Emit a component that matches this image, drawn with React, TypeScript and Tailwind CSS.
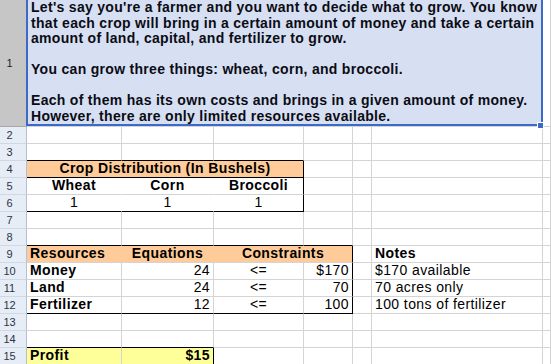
import type { ReactNode } from 'react';

type Align = 'left' | 'center' | 'right';
type Edge = 'grid' | 'black' | 'none';

const alignClass: Record<Align, string> = {
  left: 'justify-start',
  center: 'justify-center',
  right: 'justify-end',
};

const bottomClass: Record<Edge, string> = {
  grid: 'border-b-[#d4d4d4]',
  black: 'border-b-black',
  none: 'border-b-transparent',
};

const rightClass: Record<Edge, string> = {
  grid: 'border-r-[#d4d4d4]',
  black: 'border-r-black',
  none: 'border-r-transparent',
};

function Cell({
  children,
  span = '',
  align = 'left',
  bold = false,
  fill = '',
  bottom = 'grid',
  right = 'grid',
}: {
  children?: ReactNode;
  span?: string;
  align?: Align;
  bold?: boolean;
  fill?: string;
  bottom?: Edge;
  right?: Edge;
}) {
  return (
    <div
      className={[
        'flex items-end overflow-hidden whitespace-nowrap border-r border-b px-[3px] pb-px leading-[15px]',
        alignClass[align],
        bottomClass[bottom],
        rightClass[right],
        bold ? 'font-bold' : '',
        fill,
        span,
      ].join(' ')}
    >
      {children}
    </div>
  );
}

function RowHead({ n, active = false }: { n: number; active?: boolean }) {
  return (
    <div
      className={[
        'flex items-center justify-center border-r border-b pr-[7px] text-[11px] leading-[13px] tracking-normal',
        active
          ? 'bg-[#c6c6c6] border-r-[#a9a9a9] border-b-[#a9a9a9] text-[#222]'
          : 'bg-[#e6edf7] border-r-[#b3c0d2] border-b-[#cfd8e5] text-[#2e3440]',
      ].join(' ')}
    >
      {n}
    </div>
  );
}

function Blank({ count, bottom = 'grid' }: { count: number; bottom?: Edge }) {
  return (
    <>
      {Array.from({ length: count }, (_, i) => (
        <Cell key={i} bottom={bottom} />
      ))}
    </>
  );
}

const intro = [
  "Let's say you're a farmer and you want to decide what to grow. You know",
  'that each crop will bring in a certain amount of money and take a certain',
  'amount of land, capital, and fertilizer to grow.',
  '',
  'You can grow three things: wheat, corn, and broccoli.',
  '',
  'Each of them has its own costs and brings in a given amount of money.',
  'However, there are only limited resources available.',
];

const resources = [
  { name: 'Money', used: 24, limit: '$170', note: '$170 available' },
  { name: 'Land', used: 24, limit: '70', note: '70 acres only' },
  { name: 'Fertilizer', used: 12, limit: '100', note: '100 tons of fertilizer' },
];

export default function App() {
  return (
    <div className="h-[364px] w-[551px] overflow-hidden bg-white font-['Liberation_Sans',Arial,sans-serif] text-[14px] tracking-[0.4px] text-black">
      <div className="grid grid-cols-[27px_95px_92px_90px_49px_19px_171px_1fr] grid-rows-[127px_repeat(14,17px)]">
        {/* row 1: merged intro cell, selected */}
        <RowHead n={1} active />
        <div className="relative col-span-6 flex items-end border-r border-b border-r-[#d4d4d4] border-b-[#d4d4d4] bg-[#d7e0f3] pb-[2px] pl-[4px]">
          <div className="font-bold leading-[15.5px] tracking-[0.3px] text-[#0c0c14]">
            {intro.map((line, i) => (
              <div key={i} className="h-[15.5px] whitespace-nowrap">
                {line}
              </div>
            ))}
          </div>
          <div className="pointer-events-none absolute -top-[2px] -left-px -right-px bottom-0 border-2 border-[#3c6bc7]" />
          <div className="absolute -right-[2px] -bottom-[3px] z-10 h-[7px] w-[7px] border border-white bg-[#3c6bc7]" />
        </div>
        <Cell />

        {/* row 2 */}
        <RowHead n={2} />
        <Blank count={7} />

        {/* row 3 */}
        <RowHead n={3} />
        <Blank count={3} bottom="black" />
        <Blank count={4} />

        {/* row 4 */}
        <RowHead n={4} />
        <Cell span="col-span-3" align="center" bold fill="bg-[#ffcc99]" bottom="black" right="black">
          Crop Distribution (In Bushels)
        </Cell>
        <Blank count={4} />

        {/* row 5 */}
        <RowHead n={5} />
        <Cell align="center" bold right="none">Wheat</Cell>
        <Cell align="center" bold right="none">Corn</Cell>
        <Cell align="center" bold right="black">Broccoli</Cell>
        <Blank count={4} />

        {/* row 6 */}
        <RowHead n={6} />
        <Cell align="center" bottom="black" right="none">1</Cell>
        <Cell align="center" bottom="black" right="none">1</Cell>
        <Cell align="center" bottom="black" right="black">1</Cell>
        <Blank count={4} />

        {/* row 7 */}
        <RowHead n={7} />
        <Blank count={7} />

        {/* row 8 */}
        <RowHead n={8} />
        <Blank count={4} bottom="black" />
        <Blank count={3} />

        {/* row 9 */}
        <RowHead n={9} />
        <Cell bold fill="bg-[#ffcc99]" right="none">Resources</Cell>
        <Cell align="center" bold fill="bg-[#ffcc99]" right="none">Equations</Cell>
        <Cell span="col-span-2" align="center" bold fill="bg-[#ffcc99]" right="black">
          Constraints
        </Cell>
        <Cell />
        <Cell bold>Notes</Cell>
        <Cell />

        {/* rows 10-12 */}
        {resources.map((r, i) => {
          const last = i === resources.length - 1;
          return (
            <div key={r.name} className="contents">
              <RowHead n={10 + i} />
              <Cell bold bottom={last ? 'black' : 'grid'}>{r.name}</Cell>
              <Cell align="right" bottom={last ? 'black' : 'grid'}>{r.used}</Cell>
              <Cell align="center" bottom={last ? 'black' : 'grid'}>&lt;=</Cell>
              <Cell align="right" bottom={last ? 'black' : 'grid'} right="black">
                {r.limit}
              </Cell>
              <Cell />
              <Cell>{r.note}</Cell>
              <Cell />
            </div>
          );
        })}

        {/* row 13 */}
        <RowHead n={13} />
        <Blank count={7} />

        {/* row 14 */}
        <RowHead n={14} />
        <Blank count={2} bottom="black" />
        <Blank count={5} />

        {/* row 15 */}
        <RowHead n={15} />
        <Cell bold fill="bg-[#ffff99]">Profit</Cell>
        <Cell align="right" bold fill="bg-[#ffff99]" right="black">$15</Cell>
        <Blank count={5} />
      </div>
    </div>
  );
}
